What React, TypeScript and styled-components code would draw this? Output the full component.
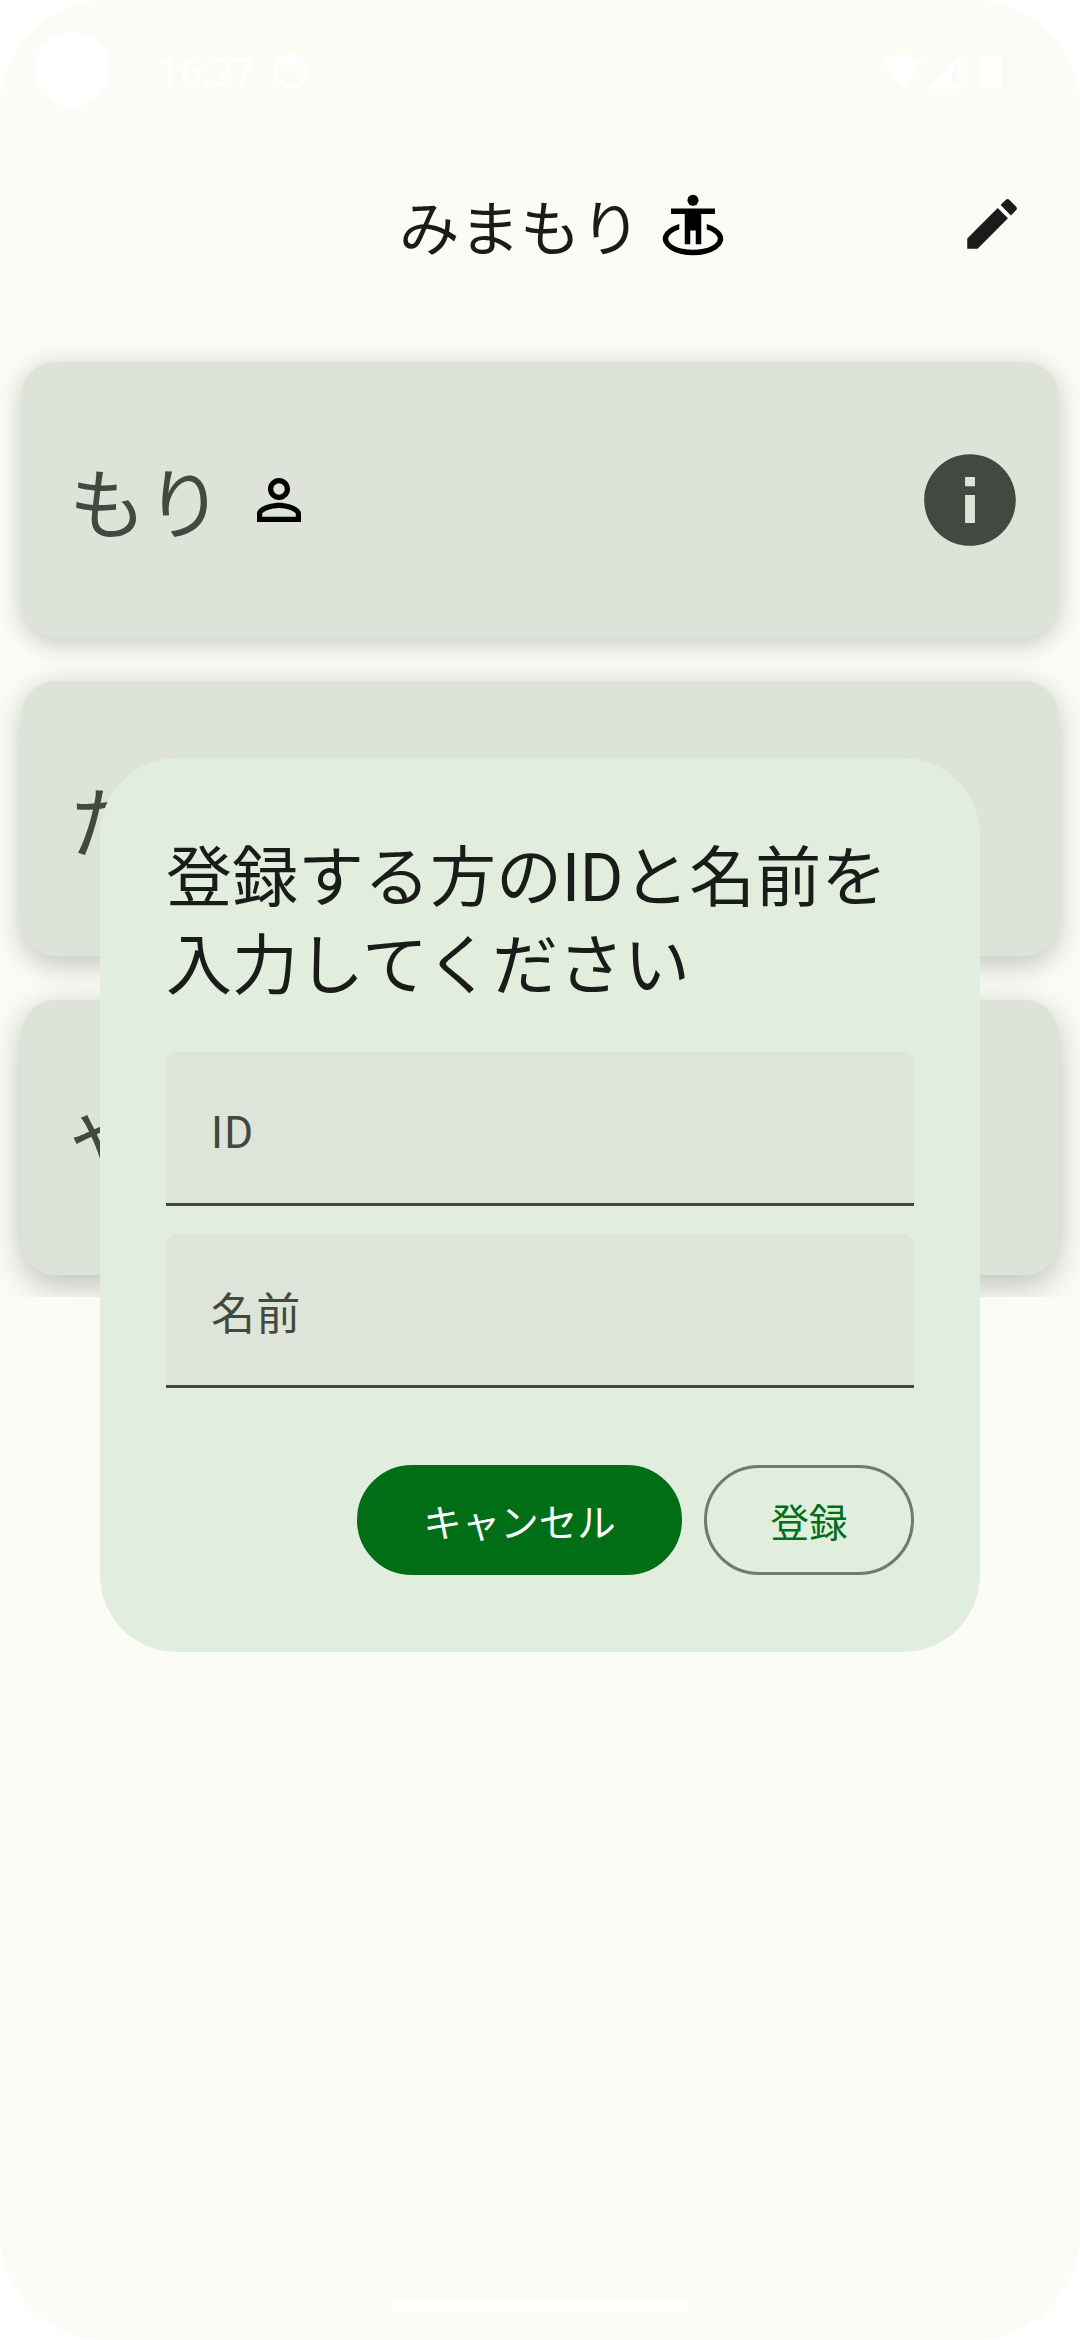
import React from "react";
import styled, { createGlobalStyle } from "styled-components";

const GlobalStyle = createGlobalStyle`
  * { box-sizing: border-box; }
  body { margin: 0; background: #ffffff; }
`;

const Screen = styled.div`
  position: relative;
  width: 1080px;
  height: 2340px;
  overflow: hidden;
  display: flex;
  flex-direction: column;
  background: #fbfcf6;
  border-radius: 106px;
  color: #1a1c19;
  font-family: Roboto, "Noto Sans CJK JP", sans-serif;
`;

const StatusBar = styled.header`
  flex: none;
  height: 136px;
  padding: 5px 66px 0 35px;
  display: flex;
  align-items: center;
  color: #ffffff;
`;

const Camera = styled.div`
  width: 75px;
  height: 75px;
  margin: -2px 48px 0 0;
  border-radius: 50%;
  background: #ffffff;
`;

const Clock = styled.time`
  flex: 1;
  display: flex;
  align-items: center;
  gap: 18px;
  font-size: 38.5px;
  line-height: 44px;
  letter-spacing: 0.3px;
`;

const ClockText = styled.span`
  padding-top: 4px;
`;

const StatusIcons = styled.div`
  display: flex;
  align-items: center;
`;

const TopBar = styled.div`
  flex: none;
  height: 176px;
  display: grid;
  grid-template-columns: 1fr auto;
  align-items: center;
  padding: 0 55px 0 45px;
`;

const Title = styled.h1`
  margin: 2px 0 0;
  padding-left: 354px;
  display: flex;
  align-items: center;
  gap: 19px;
  font-size: 60.5px;
  font-weight: 400;
  line-height: 77px;
`;

const TitleText = styled.span`
  padding-top: 10px;
`;

const Icon = styled.svg<{ $size: number }>`
  display: block;
  flex: none;
  width: ${(p) => p.$size}px;
  height: ${(p) => p.$size}px;
  fill: currentColor;
`;

const BlackIcon = styled(Icon)`
  color: #000000;
`;

const BatteryIcon = styled(Icon)`
  margin-left: 7px;
`;

const List = styled.ul`
  flex: none;
  margin: 28px 0 0;
  padding: 22px;
  display: flex;
  flex-direction: column;
  gap: 44px;
  list-style: none;
  overflow: hidden;
`;

const Card = styled.li<{ $depth: number }>`
  height: 275px;
  padding: 0 33px 0 47px;
  display: flex;
  align-items: center;
  border-radius: 33px;
  background: #dde3d8;
  color: #424940;
  box-shadow:
    0 ${(p) => 8 + p.$depth * 3}px ${(p) => 24 + p.$depth * 5}px rgba(0, 0, 0, ${(p) => 0.15 + p.$depth * 0.015}),
    0 0 32px rgba(0, 0, 0, 0.08);
`;

const Person = styled.div`
  flex: 1;
  display: flex;
  align-items: center;
  gap: 23px;
`;

const Name = styled.span`
  padding-top: 14px;
  font-size: 77px;
  line-height: 100px;
`;

const Overlay = styled.div`
  position: absolute;
  inset: 136px 0 66px;
  display: flex;
  align-items: center;
  justify-content: center;
`;

const Dialog = styled.section`
  width: 880px;
  height: 894px;
  padding: 77px 66px 66px;
  display: flex;
  flex-direction: column;
  border-radius: 77px;
  background: #e1eddd;
`;

const DialogTitle = styled.h2`
  margin: 0 0 41px;
  font-size: 66px;
  font-weight: 400;
  line-height: 88px;
`;

const Fields = styled.div`
  display: flex;
  flex-direction: column;
  gap: 28px;
`;

const Field = styled.label`
  height: 154px;
  padding: 10px 44px 0 45px;
  display: flex;
  align-items: center;
  border-radius: 11px 11px 0 0;
  border-bottom: 3px solid #424940;
  background: #dee4d9;
  color: #424940;
  font-size: 44px;
  line-height: 66px;
  letter-spacing: 1.375px;
`;

const Actions = styled.div`
  margin-top: 77px;
  display: flex;
  justify-content: flex-end;
  gap: 22px;
`;

const Button = styled.button<{ $filled?: boolean }>`
  width: ${(p) => (p.$filled ? 325 : 210)}px;
  height: 110px;
  padding: 7px 0 0;
  border: 3px solid ${(p) => (p.$filled ? "#006e17" : "#72796f")};
  border-radius: 55px;
  background: ${(p) => (p.$filled ? "#006e17" : "transparent")};
  color: ${(p) => (p.$filled ? "#ffffff" : "#006e17")};
  font: 400 38.5px/55px Roboto, "Noto Sans CJK JP", sans-serif;
  white-space: nowrap;
`;

const HomeIndicator = styled.div`
  width: 298px;
  height: 11px;
  margin: auto auto 28px;
  border-radius: 6px;
  background: #ffffff;
`;

const people = [
  { name: "もり", expanded: true },
  { name: "た", expanded: false },
  { name: "や", expanded: false },
];

export default function App() {
  return (
    <>
      <GlobalStyle />
      <Screen>
        <StatusBar>
          <Camera />
          <Clock>
            <ClockText>16:27</ClockText>
            <Icon $size={36} viewBox="0 0 36 36">
              <circle cx="18" cy="18" r="15.2" fill="none" stroke="currentColor" strokeWidth="3.4" />
              <path d="M7 11C9 5 13 2 18 2s9 3 11 9l-3-1 2 6-5-4H13l-5 4 2-6z" />
              <path d="M10 22l2 2-1 1-2-2zM20 24l2 2-1 1-2-2z" />
            </Icon>
          </Clock>
          <StatusIcons>
            <Icon $size={44} viewBox="0 0 44 44">
              <path d="M22 39 2 13a31 31 0 0 1 40 0z" />
            </Icon>
            <Icon $size={38} viewBox="0 0 38 38">
              <path fillRule="evenodd" d="M2 37 36 3v34zM26 17v16h7V10z" />
            </Icon>
            <BatteryIcon $size={44} viewBox="0 0 44 44">
              <path d="M18 4.500h8v4h4a2 2 0 0 1 2 2v27a2 2 0 0 1-2 2H13a2 2 0 0 1-2-2v-27a2 2 0 0 1 2-2h5z" />
            </BatteryIcon>
          </StatusIcons>
        </StatusBar>

        <TopBar>
          <Title>
            <TitleText>みまもり</TitleText>
            <BlackIcon $size={66} viewBox="0 0 24 24">
              <circle cx="12" cy="3" r="2" />
              <path d="M4 6h16v2h-5v11h-2v-5h-2v5H9V8H4z" />
              <path d="M7 11.660A11 6 0 1 0 17 11.660V13.670A9 4 0 1 1 7 13.670z" />
            </BlackIcon>
          </Title>
          <Icon $size={66} viewBox="0 0 24 24">
            <path d="M3 17.250V21h3.750L17.810 9.940l-3.750-3.750L3 17.250zM20.710 7.040a1 1 0 0 0 0-1.410l-2.340-2.340a1 1 0 0 0-1.410 0l-1.830 1.830 3.750 3.750 1.830-1.830z" />
          </Icon>
        </TopBar>

        <List>
          {people.map(({ name, expanded }, i) => (
            <Card key={name} $depth={i}>
              <Person>
                <Name>{name}</Name>
                {expanded && (
                  <BlackIcon $size={66} viewBox="0 0 24 24">
                    <path d="M12 5.900a2.100 2.100 0 1 1 0 4.200 2.100 2.100 0 0 1 0-4.200m0 9c2.970 0 6.100 1.460 6.100 2.100v1.100H5.900V17c0-.64 3.130-2.100 6.100-2.100M12 4C9.790 4 8 5.790 8 8s1.790 4 4 4 4-1.790 4-4-1.790-4-4-4m0 9c-2.670 0-8 1.340-8 4v3h16v-3c0-2.660-5.330-4-8-4" />
                  </BlackIcon>
                )}
              </Person>
              {expanded && (
                <Icon $size={110} viewBox="0 0 24 24">
                  <path d="M12 2C6.480 2 2 6.480 2 12s4.480 10 10 10 10-4.480 10-10S17.520 2 12 2m1.080 15h-2.160v-6.100h2.160zm0-8h-2.160V7h2.160z" />
                </Icon>
              )}
            </Card>
          ))}
        </List>

        <HomeIndicator />

        <Overlay>
          <Dialog>
            <DialogTitle>登録する方のIDと名前を入力してください</DialogTitle>
            <Fields>
              <Field>ID</Field>
              <Field>名前</Field>
            </Fields>
            <Actions>
              <Button $filled>キャンセル</Button>
              <Button>登録</Button>
            </Actions>
          </Dialog>
        </Overlay>
      </Screen>
    </>
  );
}
